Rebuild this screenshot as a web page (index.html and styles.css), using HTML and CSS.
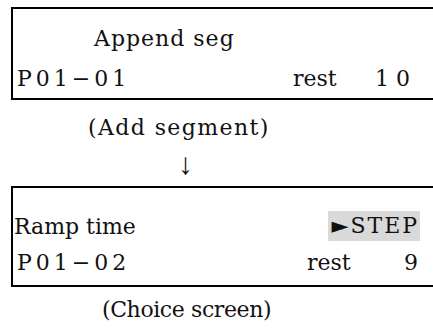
FILE: index.html
```html
<!DOCTYPE html>
<html lang="en">
<head>
    <meta charset="UTF-8">
    <title>Segment screens</title>
    <link rel="stylesheet" href="styles.css">
</head>
<body>

    <!-- Append segment screen -->
    <div class="screen screen-add">
        <div class="row row-title">Append seg</div>
        <div class="row">
            <span class="code">P01−01</span>
            <span class="rest">rest</span>
            <span class="count">1 0</span>
        </div>
    </div>
    <div class="caption caption-add">(Add segment)</div>
    <div class="arrow">↓</div>

    <!-- Choice screen -->
    <div class="screen screen-choice">
        <div class="row">
            <span class="label">Ramp time</span>
            <span class="choice">►STEP</span>
        </div>
        <div class="row">
            <span class="code">P01−02</span>
            <span class="rest rest-wide">rest</span>
            <span class="count">9</span>
        </div>
    </div>
    <div class="caption caption-choice">(Choice screen)</div>

</body>
</html>
```

FILE: styles.css
```css
/* Page */
body {
    margin: 0;
    padding-top: 7px;
    font-family: "DejaVu Serif", "Liberation Serif", serif;
    font-size: 22px;
    color: #111;
    background: #fff;
    overflow: hidden;
    width: 433px;
}

/* LCD screen boxes (right edge runs off the page) */
.screen {
    margin-left: 11px;
    width: 422px;
    border: 2px solid #000;
    border-right: none;
    box-sizing: border-box;
}

.screen-add {
    padding-top: 9px;
}

.screen-choice {
    padding-top: 20px;
    padding-bottom: 5px;
}

.row {
    display: flex;
    align-items: center;
    height: 40px;
    white-space: nowrap;
}

.screen-choice .row {
    height: 36px;
}

.row-title {
    padding-left: 81px;
    letter-spacing: 1px;
}

.code {
    letter-spacing: 4px;
    padding-left: 4px;
    width: 276px;
}

.rest {
    width: 82px;
}

.rest-wide {
    margin-left: 14px;
    width: 97px;
}

.label {
    flex: 1;
    padding-left: 1px;
}

.choice {
    background: #d9d9d9;
    padding: 2px 1px 3px 3px;
    margin-right: 13px;
    letter-spacing: 2px;
}

/* Captions under each screen */
.caption {
    height: 40px;
    line-height: 40px;
}

.caption-add {
    margin-top: 8px;
    padding-left: 88px;
    letter-spacing: 1.4px;
}

.caption-choice {
    margin-top: 3px;
    padding-left: 102px;
    letter-spacing: -0.4px;
}

.arrow {
    padding-left: 178px;
    height: 38px;
    line-height: 32px;
    font-family: "Liberation Serif", serif;
    font-size: 30px;
}
```
